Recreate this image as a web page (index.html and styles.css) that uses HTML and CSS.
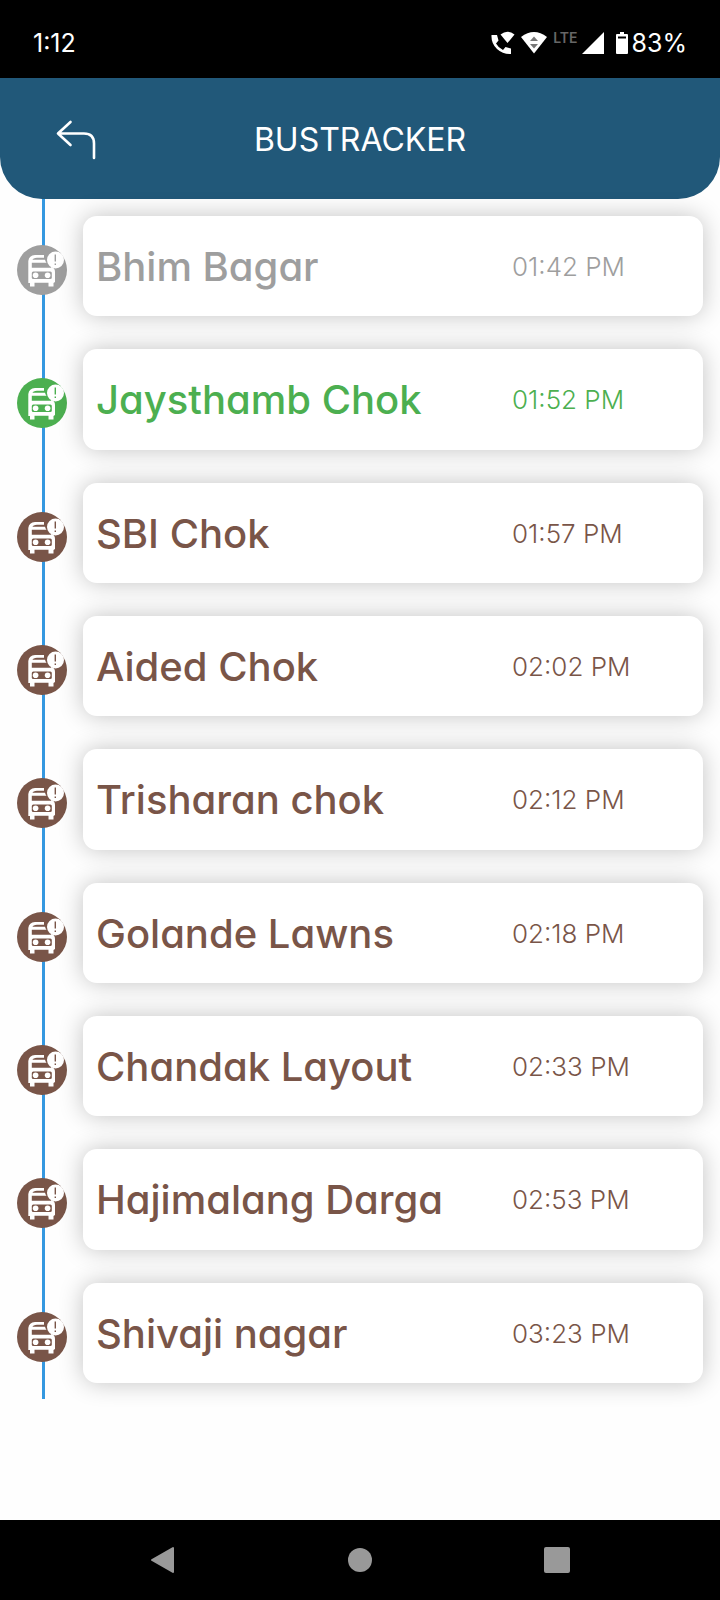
FILE: index.html
```html
<!DOCTYPE html>
<html lang="en">
<head>
<meta charset="utf-8">
<meta name="viewport" content="width=device-width, initial-scale=1">
<title>BusTracker</title>
<link rel="stylesheet" href="styles.css">
<script src="stops.js" defer></script>
</head>
<body class="app">
<svg class="sprite" aria-hidden="true">
  <symbol id="bus" viewBox="0 0 50 50">
    <circle cx="25" cy="25" r="25" fill="currentColor"/>
    <path d="M11.300 38V16Q12 10.500 18 10H27V12.800H20Q16 13.200 15.500 14.800H28Q28.500 16.800 29.500 17.800H14.800V22.800H34V22Q38 22.500 38 27V37L36.500 38V41.500H31.500V37.800H17.500V41.500H13V38Z" fill="#fff"/>
    <rect x="14.800" y="26.500" width="20" height="7.500" rx="1.500" fill="currentColor"/>
    <circle cx="18.600" cy="30.200" r="2.800" fill="#fff"/>
    <circle cx="30.600" cy="30.200" r="2.800" fill="#fff"/>
    <circle cx="38.500" cy="15" r="8.500" fill="#fff"/>
    <path d="M38.300 9.500V16.500M38.300 18.500V20" stroke="currentColor" stroke-width="1.400" fill="none"/>
  </symbol>
</svg>

<div class="status">
  <time class="status-time">1:12</time>
  <div class="status-icons">
    <svg width="24" height="24" viewBox="0 0 24 24" fill="#fff"><path d="M0.500 4H6L7.500 9.500L5 12.500Q7.500 17 12 19L14.500 16L20 17.500V23Q12 23.500 6 18T0.500 4Z"/><path d="M9.500 3.500Q16.500-2 23.500 3.500L16.500 12Z"/></svg>
    <svg class="wifi" width="26" height="22" viewBox="0 0 26 22"><path d="M0 5Q13-5 26 5L13 21.500Z" fill="#fff"/><path d="M9 9L13 4.500L17 9ZM9 12H17L13 16.500Z" fill="#777"/></svg>
    <span class="lte">LTE</span>
    <svg width="22" height="22" viewBox="0 0 22 22"><path d="M0 22L22 0V22Z" fill="#fff"/></svg>
    <svg class="battery" width="12" height="22" viewBox="0 0 12 22"><path d="M4 0H8V2H11Q12 2 12 3V21Q12 22 11 22H1Q0 22 0 21V3Q0 2 1 2H4Z" fill="#fff"/><path d="M2 5.500H10" stroke="#000" stroke-width="2"/></svg>
    <span>83%</span>
  </div>
</div>

<header class="header">
  <button class="back" type="button" aria-label="Back">
    <svg width="40" height="40" viewBox="0 0 40 40" fill="none" stroke="#fff" stroke-width="2.600" stroke-linecap="round" stroke-linejoin="round"><path d="M14.500 2L2 13.500L14.500 25M2 13.500H28Q38 13.500 38 23.500V38"/></svg>
  </button>
  <h1 class="title">BUSTRACKER</h1>
</header>

<main class="main">
  <ol class="stops" id="stops"></ol>
</main>

<nav class="nav" aria-label="System navigation">
  <button class="nav-button" type="button" aria-label="Back"><svg width="26" height="28" viewBox="0 0 26 28"><path d="M2 14L23 2V26Z" fill="#999" stroke="#999" stroke-width="2" stroke-linejoin="round"/></svg></button>
  <button class="nav-button" type="button" aria-label="Home"><svg width="26" height="26" viewBox="0 0 26 26"><circle cx="13" cy="13" r="12" fill="#999"/></svg></button>
  <button class="nav-button" type="button" aria-label="Recent apps"><svg width="26" height="26" viewBox="0 0 26 26"><rect width="26" height="26" rx="2" fill="#999"/></svg></button>
</nav>
</body>
</html>
```
FILE: stops.js
```js
const stops = [
  ["Bhim Bagar", "01:42 PM", "passed"],
  ["Jaysthamb Chok", "01:52 PM", "current"],
  ["SBI Chok", "01:57 PM", "upcoming"],
  ["Aided Chok", "02:02 PM", "upcoming"],
  ["Trisharan chok", "02:12 PM", "upcoming"],
  ["Golande Lawns", "02:18 PM", "upcoming"],
  ["Chandak Layout", "02:33 PM", "upcoming"],
  ["Hajimalang Darga", "02:53 PM", "upcoming"],
  ["Shivaji nagar", "03:23 PM", "upcoming"]
];

document.getElementById("stops").innerHTML = stops.map(([name, time, state]) => `
  <li class="stop ${state}">
    <div class="rail"><svg class="bus" aria-hidden="true"><use href="#bus"/></svg></div>
    <article class="card">
      <h2 class="name">${name}</h2>
      <time class="time">${time}</time>
    </article>
  </li>`).join("");
```
FILE: styles.css
```css
* {
  box-sizing: border-box;
}

.app {
  margin: 0;
  min-height: 100vh;
  display: flex;
  flex-direction: column;
  background: #fefefe;
  font-family: Inter, "Liberation Sans", sans-serif;
}

.sprite {
  display: none;
}

svg {
  display: block;
}

button {
  border: 0;
  padding: 0;
  background: none;
}

.status {
  min-height: 78px;
  padding: 8px 33px 0;
  display: flex;
  align-items: center;
  justify-content: space-between;
  background: #000;
  color: #fff;
  font-size: 25px;
  line-height: 32px;
}

.status-icons {
  display: flex;
  align-items: center;
  gap: 4px;
}

.wifi {
  margin-left: 2px;
}

.lte {
  padding: 0 0 10px 2px;
  color: #666;
  font-size: 14px;
  font-weight: 600;
  line-height: 16px;
}

.battery {
  margin-left: 8px;
}

.header {
  min-height: 121px;
  padding: 2px 56px 0;
  display: grid;
  grid-template-columns: 40px 1fr 40px;
  align-items: center;
  background: #215879;
  border-radius: 0 0 42px 42px;
}

.title {
  margin: 0;
  color: #fff;
  font-size: 32px;
  font-weight: 400;
  line-height: 40px;
  text-align: center;
}

.main {
  flex: 1;
  display: flex;
  padding-bottom: 121px;
}

.stops {
  flex: 1;
  margin: 0;
  padding: 0;
  display: grid;
  grid-auto-rows: 1fr;
  list-style: none;
  background: linear-gradient(#3498e0, #3498e0) 42px 0 / 3px 100% no-repeat;
}

.stop {
  display: grid;
  grid-template-columns: 50px 1fr;
  column-gap: 16px;
  padding: 17px 17px 16px;
}

.rail {
  display: flex;
  align-items: center;
  padding-top: 8px;
}

.bus {
  width: 50px;
  height: 50px;
}

.card {
  display: grid;
  grid-template-columns: 1fr 191px;
  align-items: center;
  padding: 2px 0 0 13px;
  min-height: 100px;
  background: #fff;
  border-radius: 14px;
  box-shadow: 0 0 24px rgba(0, 0, 0, 0.24);
}

.name {
  margin: 0;
  font-size: 40px;
  font-weight: 500;
  font-feature-settings: "cv11";
  line-height: 48px;
}

.time {
  font-size: 26px;
  font-weight: 300;
  line-height: 32px;
}

.passed {
  color: #9e9e9e;
}

.current {
  color: #4caf50;
}

.upcoming {
  color: #795548;
}

.nav {
  min-height: 80px;
  padding: 0 9%;
  display: grid;
  grid-template-columns: repeat(3, 1fr);
  background: #000;
}

.nav-button {
  display: flex;
  align-items: center;
  justify-content: center;
}
```
